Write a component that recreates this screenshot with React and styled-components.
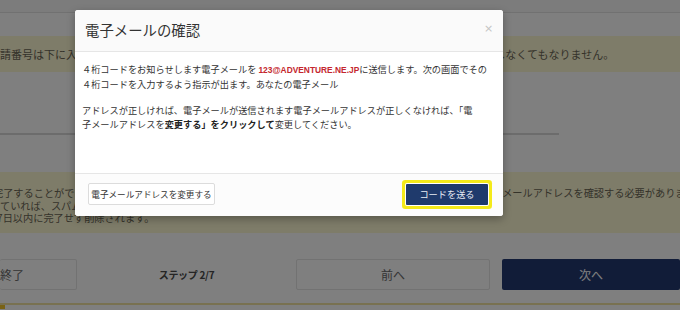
import React from "react";
import styled, { createGlobalStyle } from "styled-components";

const Global = createGlobalStyle`
  html, body { margin: 0; padding: 0; background: #ffffff; }
  body { font-family: "Noto Sans CJK JP", "Noto Sans", sans-serif; }
`;

const Page = styled.div`
  position: relative;
  width: 680px;
  height: 310px;
  overflow: hidden;
  background: #ffffff;
  display: flex;
  flex-direction: column;
`;

const TopBar = styled.div`
  height: 12px;
  flex: none;
  background: #f8f8f8;
  border-bottom: 1px solid #e2e2e2;
`;

const Notice = styled.div`
  flex: none;
  margin-top: ${(p) => p.$top}px;
  height: ${(p) => p.$h}px;
  padding-top: ${(p) => p.$pt}px;
  box-sizing: border-box;
  background: #fdf8d2;
  color: #6a6655;
  font-size: ${(p) => p.$fs}px;
  line-height: ${(p) => p.$lh}px;
  white-space: nowrap;
  overflow: hidden;
`;

const NoticeLine = styled.div`
  text-indent: ${(p) => p.$indent || 0}px;
`;

const Underline = styled.div`
  flex: none;
  margin-top: 61px;
  width: 559px;
  height: 2px;
  background: #d8d8d8;
`;

const NavRow = styled.div`
  flex: none;
  margin-top: 26px;
  height: 31px;
  display: flex;
  align-items: stretch;
`;

const GhostButton = styled.div`
  flex: none;
  width: ${(p) => p.$w}px;
  box-sizing: border-box;
  border: 1px solid #e4e4e4;
  border-left: ${(p) => (p.$cut ? "none" : "1px solid #e4e4e4")};
  border-radius: 2px;
  background: #fefefe;
  color: #6a6a6a;
  font-size: 12px;
  display: flex;
  align-items: center;
  justify-content: ${(p) => (p.$cut ? "flex-start" : "center")};
`;

const StepLabel = styled.div`
  flex: none;
  width: 219px;
  display: flex;
  align-items: center;
  justify-content: center;
  font-size: 10px;
  font-weight: 700;
  color: #4a4a4a;
  letter-spacing: -0.3px;
`;

const NextButton = styled.div`
  flex: none;
  width: 178px;
  margin-left: 12px;
  background: #223871;
  border-radius: 2px;
  color: #ffffff;
  font-size: 12px;
  display: flex;
  align-items: center;
  justify-content: center;
`;

const Progress = styled.div`
  flex: none;
  margin-top: 13px;
  height: 6px;
  box-sizing: border-box;
  border-top: 2px solid #f0e2a2;
  display: flex;
`;

const ProgressFill = styled.div`
  width: 5px;
  background: #f2c52c;
`;

const Backdrop = styled.div`
  position: absolute;
  inset: 0;
  background: rgba(0, 0, 0, 0.5);
`;

const Modal = styled.div`
  position: absolute;
  left: 75px;
  top: 10px;
  width: 428px;
  height: 206px;
  background: #fff;
  border-radius: 3px;
  box-shadow: 0 3px 9px rgba(0, 0, 0, 0.3);
  display: flex;
  flex-direction: column;
  overflow: hidden;
`;

const ModalHeader = styled.div`
  flex: none;
  height: 42px;
  box-sizing: border-box;
  background: #fafafa;
  border-bottom: 1px solid #e6e6e6;
  display: flex;
  align-items: center;
  justify-content: space-between;
  padding: 0 11px 2px 10px;
`;

const Title = styled.div`
  font-size: 14.4px;
  color: #333;
`;

const Close = styled.div`
  font-family: "DejaVu Sans", sans-serif;
  font-size: 11px;
  color: #c4c4c4;
  width: 8px;
  text-align: center;
  margin-top: -2px;
`;

const ModalBody = styled.div`
  flex: 1;
  padding: 11px 7px 0 7px;
  color: #333;
  font-size: 9.2px;
  line-height: 13.5px;
  white-space: nowrap;
`;

const Para = styled.p`
  margin: 0 0 13px 0;
`;

const Email = styled.span`
  font-family: "Liberation Sans", Arial, sans-serif;
  font-weight: 700;
  font-size: 8.4px;
  color: #c4262e;
`;

const Strong = styled.b`
  font-weight: 700;
  color: #222;
`;

const ModalFooter = styled.div`
  flex: none;
  height: 43px;
  box-sizing: border-box;
  border-top: 1px solid #e6e6e6;
  background: #fcfcfc;
  display: flex;
  align-items: center;
  justify-content: space-between;
  padding: 0 15px 2px 13px;
`;

const SecondaryButton = styled.div`
  height: 22px;
  width: 127px;
  box-sizing: border-box;
  border: 1px solid #dcdcdc;
  border-radius: 2px;
  background: #fff;
  color: #333;
  font-size: 8.6px;
  display: flex;
  align-items: center;
  justify-content: center;
  white-space: nowrap;
`;

const PrimaryButton = styled.div`
  height: 21px;
  width: 82px;
  box-sizing: border-box;
  background: #1f3a6c;
  border-radius: 1px;
  color: #e8ecf4;
  font-size: 9.2px;
  display: flex;
  align-items: center;
  justify-content: center;
  box-shadow: 0 0 0 1px #ffffff, 0 0 0 4px #f4ea1a;
`;

export default function App() {
  return (
    <>
      <Global />
      <Page>
        <TopBar />
        <Notice $top={23} $h={36} $pt={11} $lh={14} $fs={11}>
          <NoticeLine>
            請番号は下に入力してください。この番号はお客様の申請を確認するために使用されるため、入力をしなくてもなりません。
          </NoticeLine>
        </Notice>
        <Underline />
        <Notice $top={37} $h={61} $pt={15} $lh={12.5} $fs={10.2}>
          <NoticeLine $indent={-7}>
            完了することができない場合は、大変お手数ですが、ご登録いただいた電子メールアドレスを確認し、再度電子メールアドレスを確認する必要があります。
          </NoticeLine>
          <NoticeLine>ていれば、スパムフォルダをご確認ください。</NoticeLine>
          <NoticeLine $indent={-3}>7日以内に完了せず削除されます。</NoticeLine>
        </Notice>
        <NavRow>
          <GhostButton $w={77} $cut>終了</GhostButton>
          <StepLabel>ステップ 2/7</StepLabel>
          <GhostButton $w={194}>前へ</GhostButton>
          <NextButton>次へ</NextButton>
        </NavRow>
        <Progress>
          <ProgressFill />
        </Progress>

        <Backdrop />

        <Modal>
          <ModalHeader>
            <Title>電子メールの確認</Title>
            <Close>×</Close>
          </ModalHeader>
          <ModalBody>
            <Para>
              ４桁コードをお知らせします電子メールを <Email>123@ADVENTURE.NE.JP</Email>に送信します。次の画面でその
              <br />
              ４桁コードを入力するよう指示が出ます。あなたの電子メール
            </Para>
            <Para>
              アドレスが正しければ、電子メールが送信されます電子メールアドレスが正しくなければ、「電
              <br />
              子メールアドレスを<Strong>変更する」をクリックして</Strong>変更してください。
            </Para>
          </ModalBody>
          <ModalFooter>
            <SecondaryButton>電子メールアドレスを変更する</SecondaryButton>
            <PrimaryButton>コードを送る</PrimaryButton>
          </ModalFooter>
        </Modal>
      </Page>
    </>
  );
}
